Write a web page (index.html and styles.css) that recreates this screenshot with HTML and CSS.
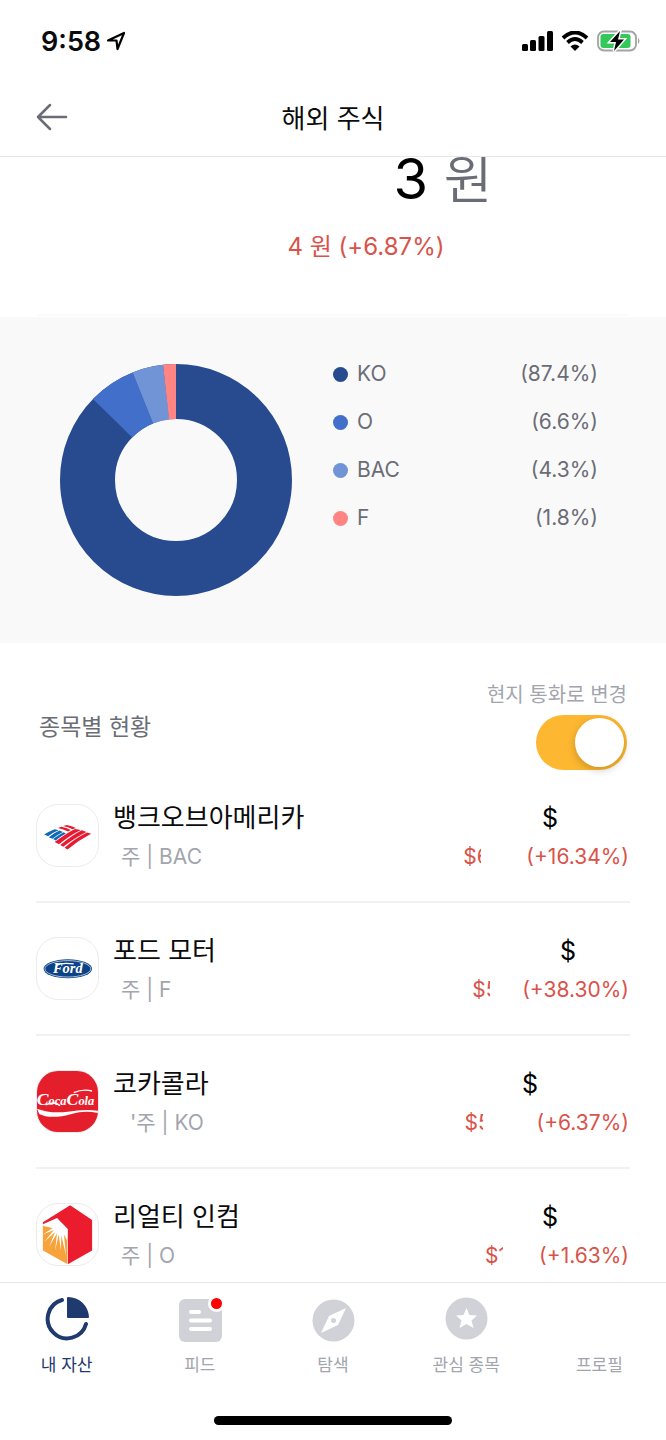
FILE: index.html
```html
<!DOCTYPE html>
<html lang="ko">
<head>
    <meta charset="UTF-8">
    <meta name="viewport" content="width=device-width, initial-scale=1.0">
    <title>해외 주식</title>
    <link rel="stylesheet" href="styles.css">
</head>
<body>

    <!-- Status bar -->
    <div class="status-bar">
        <div class="status-left">
            <span class="clock">9:58</span>
            <svg class="location" viewBox="0 0 20 20" width="20" height="20">
                <path d="M2 9.5 L18 2 L11.5 18 L10.5 9.5 Z" fill="none" stroke="#000" stroke-width="2.2" stroke-linejoin="round"/>
            </svg>
        </div>
        <div class="status-right">
            <svg viewBox="0 0 31 20" width="31" height="20">
                <rect x="0" y="13" width="6" height="7" rx="1.5"/>
                <rect x="8" y="9" width="6" height="11" rx="1.5"/>
                <rect x="16.500" y="5" width="6" height="15" rx="1.5"/>
                <rect x="25" y="0" width="6" height="20" rx="1.5"/>
            </svg>
            <svg viewBox="0 0 28 20" width="28" height="20">
                <path d="M2 7 Q14 -4 26 7" fill="none" stroke="#000" stroke-width="4"/>
                <path d="M6.500 11.500 Q14 4.500 21.500 11.500" fill="none" stroke="#000" stroke-width="3.800"/>
                <path d="M9.500 15.500 Q14 11.500 18.500 15.500 L14 20 Z"/>
            </svg>
            <svg viewBox="0 0 44 22" width="44" height="22">
                <rect x="1" y="1.500" width="38" height="19" rx="6" fill="#fff" stroke="#a3a3a3" stroke-width="1.800"/>
                <rect x="3.500" y="4" width="30" height="14" rx="3" fill="#34c759"/>
                <path d="M41 8 Q44 11 41 14 Z" fill="#a3a3a3"/>
                <path d="M23 1 L13 12 H19 L17 21 L27 9.500 H21 Z" stroke="#fff" stroke-width="3"/>
                <path d="M23 1 L13 12 H19 L17 21 L27 9.500 H21 Z"/>
            </svg>
        </div>
    </div>

    <!-- Title bar -->
    <header class="title-bar">
        <button class="back-btn" type="button" aria-label="뒤로">
            <svg viewBox="0 0 32 28" width="32" height="28">
                <path d="M14 2 L2 14 L14 26 M2 14 H30" fill="none" stroke="#6b6d76" stroke-width="2.500" stroke-linecap="round" stroke-linejoin="round"/>
            </svg>
        </button>
        <h1>해외 주식</h1>
    </header>

    <main class="content">
        <!-- Total value -->
        <section class="total">
            <p class="total-value"><span class="mask"></span>3 <span class="unit">원</span></p>
            <p class="total-change"><span class="mask"></span>4 원 (+6.87%)</p>
        </section>

        <!-- Portfolio weights -->
        <section class="weights">
            <svg class="donut" viewBox="-116 -116 232 232" width="232" height="232">
                <g fill="none" stroke-width="55" transform="rotate(-90)">
                    <circle r="88.500" pathLength="1000" stroke="#284b8f"/>
                    <circle r="88.500" pathLength="1000" stroke="#416fca" stroke-dasharray="66 934" stroke-dashoffset="-873"/>
                    <circle r="88.500" pathLength="1000" stroke="#7194d6" stroke-dasharray="43 957" stroke-dashoffset="-939"/>
                </g>
                <path d="M-13 -115.300 A116 116 0 0 1 0 -116 V-61 A61 61 0 0 0 -7 -60.600 Z" fill="#ff8585"/>
            </svg>
            <ul class="legend">
                <li class="ko"><span>KO</span><span class="percent">(87.4%)</span></li>
                <li class="o"><span>O</span><span class="percent">(6.6%)</span></li>
                <li class="bac"><span>BAC</span><span class="percent">(4.3%)</span></li>
                <li class="f"><span>F</span><span class="percent">(1.8%)</span></li>
            </ul>
        </section>

        <!-- Holdings -->
        <section class="holdings">
            <div class="holdings-head">
                <h2>종목별 현황</h2>
                <label class="currency">
                    <span>현지 통화로 변경</span>
                    <input type="checkbox" class="switch" role="switch" checked>
                </label>
            </div>

            <ul class="stocks">
                <li class="stock">
                    <svg class="logo" viewBox="0 0 186 186">
                        <g fill="#e61b32">
                            <path d="M54 113 Q92 84 116 73 L134 76 Q100 92 67 120 Z"/>
                            <path d="M71 122 Q108 91 137 77 L151 82 Q116 99 80 127 Z"/>
                            <path d="M84 130 Q122 98 153 84 L165 88 Q126 108 93 136 Z"/>
                            <path d="M64 70 L74 66 Q91 69 103 76 L95 81 Q80 73 64 70 Z"/>
                            <path d="M80 64 L91 61 Q106 64 119 70 L108 74 Q95 67 80 64 Z"/>
                        </g>
                        <g fill="#1268b3">
                            <path d="M22 90 Q38 80 54 74 L66 77 Q48 84 34 95 Z"/>
                            <path d="M36 98 Q54 84 69 78 L79 82 Q62 90 47 103 Z"/>
                            <path d="M49 104 Q67 90 81 83 L88 87 Q72 96 57 108 Z"/>
                        </g>
                    </svg>
                    <div class="stock-info">
                        <strong>뱅크오브아메리카</strong>
                        <span class="shares">주 | BAC</span>
                    </div>
                    <div class="stock-value">
                        <span class="amount">$<span class="mask"></span></span>
                        <span class="change"><span class="cut">$6</span>(+16.34%)</span>
                    </div>
                </li>
                <li class="stock stock-f">
                    <svg class="logo" viewBox="0 0 186 186">
                        <ellipse cx="94" cy="94" rx="74" ry="29" fill="#0c4287"/>
                        <ellipse cx="94" cy="94" rx="70" ry="25" fill="none" stroke="#fff" stroke-width="2"/>
                        <path d="M60 84 Q74 74 112 79" fill="none" stroke="#fff" stroke-width="4"/>
                        <text class="ford-text" x="94" y="108">Ford</text>
                    </svg>
                    <div class="stock-info">
                        <strong>포드 모터</strong>
                        <span class="shares">주 | F</span>
                    </div>
                    <div class="stock-value">
                        <span class="amount">$<span class="mask"></span></span>
                        <span class="change"><span class="cut">$5</span>(+38.30%)</span>
                    </div>
                </li>
                <li class="stock stock-ko">
                    <svg class="logo" viewBox="0 0 186 186">
                        <rect width="186" height="186" fill="#e51e2b"/>
                        <text class="cola-text" x="87" y="104"><tspan class="cola-cap">C</tspan>oca<tspan class="cola-cap">C</tspan>ola</text>
                        <path d="M26 103 Q56 91 70 106 M112 66 Q140 54 168 61" fill="none" stroke="#fff" stroke-width="4"/>
                        <path d="M0 115 Q42 131 94 124 Q145 115 186 121 V128 Q144 120 108 130 Q42 149 7 131 Z" fill="#fff"/>
                    </svg>
                    <div class="stock-info">
                        <strong>코카콜라</strong>
                        <span class="shares">'주 | KO</span>
                    </div>
                    <div class="stock-value">
                        <span class="amount">$<span class="mask"></span></span>
                        <span class="change"><span class="cut">$5</span>(+6.37%)</span>
                    </div>
                </li>
                <li class="stock stock-o">
                    <svg class="logo" viewBox="0 0 186 186">
                        <path d="M18 65 H56 L92 86 V183 L18 142 Z" fill="#f6a33b"/>
                        <g fill="#fff">
                            <path d="M18 67 L60 42 L94 75 V98 L91 110 L82 93 L88 155 L74 95 L73 142 L66 93 L55 143 L61 89 L37 130 L55 85 L22 116 L51 79 L18 93 L48 73 Z"/>
                        </g>
                        <path d="M18 56 L101 4 L168 49 V142 L94 184 V76 L61 43 L18 62 Z" fill="#eb1c2e"/>
                    </svg>
                    <div class="stock-info">
                        <strong>리얼티 인컴</strong>
                        <span class="shares">주 | O</span>
                    </div>
                    <div class="stock-value">
                        <span class="amount">$<span class="mask"></span></span>
                        <span class="change"><span class="cut">$1</span>(+1.63%)</span>
                    </div>
                </li>
            </ul>
        </section>
    </main>

    <!-- Bottom tabs -->
    <nav class="tabs">
        <a href="#assets" class="tab active">
            <svg viewBox="0 0 44 46" width="44" height="46">
                <path d="M17 3 A19.500 19.500 0 1 0 41 27" fill="none" stroke="#1f3a6e" stroke-width="4" stroke-linecap="round"/>
                <path d="M22 1 Q22 0 23 0 A21 21 0 0 1 44 20 Q44 21 43 21 H23 Q22 21 22 20 Z" fill="#1f3a6e"/>
            </svg>
            <span>내 자산</span>
        </a>
        <a href="#feed" class="tab">
            <svg viewBox="0 0 44 46" width="44" height="46">
                <rect x="1" y="2" width="43" height="43" rx="6" fill="#d1d2d7"/>
                <path d="M13 15 H21 M13 23.500 H32 M13 32 H32" stroke="#fff" stroke-width="4" stroke-linecap="round"/>
                <circle cx="38.500" cy="6.500" r="8.500" fill="#fff"/>
                <circle cx="38.500" cy="6.500" r="5.500" fill="#f00"/>
            </svg>
            <span>피드</span>
        </a>
        <a href="#explore" class="tab">
            <svg viewBox="0 0 44 46" width="44" height="46">
                <circle cx="22.500" cy="23.500" r="21" fill="#d1d2d7"/>
                <path d="M35 11 L18 19 L10 36 L27 28 Z" fill="#fff"/>
                <circle cx="22.500" cy="23.500" r="2.500" fill="#d1d2d7"/>
            </svg>
            <span>탐색</span>
        </a>
        <a href="#watchlist" class="tab">
            <svg viewBox="0 0 44 46" width="44" height="46">
                <circle cx="22.500" cy="21.500" r="21" fill="#d1d2d7"/>
                <path d="M22.500 11 L25.500 18 L33 18.500 L27.500 23.500 L29.500 31 L22.500 27 L15.500 31 L17.500 23.500 L12 18.500 L19.500 18 Z" fill="#fff"/>
            </svg>
            <span>관심 종목</span>
        </a>
        <a href="#profile" class="tab">
            <svg viewBox="0 0 44 46" width="44" height="46"></svg>
            <span>프로필</span>
        </a>
    </nav>
    <div class="home-indicator"></div>

</body>
</html>
```
FILE: styles.css
```css
* {
    margin: 0;
    padding: 0;
    box-sizing: border-box;
}

body {
    display: flex;
    flex-direction: column;
    height: 100vh;
    background: #fff;
    color: #0b0b0d;
    font-family: Inter, "Noto Sans CJK KR", sans-serif;
    font-size: 21px;
}

ul {
    list-style: none;
}

svg {
    display: block;
    flex-shrink: 0;
}

/* Status bar */
.status-bar {
    display: flex;
    justify-content: space-between;
    align-items: center;
    flex-shrink: 0;
    height: 80px;
    padding: 2px 25px 0 41px;
}

.status-left {
    display: flex;
    align-items: center;
    gap: 5px;
}

.status-right {
    display: flex;
    align-items: center;
    gap: 8px;
}

.clock {
    font-size: 27px;
    font-weight: 600;
}

/* Title bar */
.title-bar {
    display: grid;
    grid-template-columns: 32px 1fr 32px;
    align-items: center;
    flex-shrink: 0;
    height: 77px;
    padding: 0 36px 3px;
    border-bottom: 1px solid #e6e7ea;
}

.title-bar h1 {
    font-size: 26px;
    font-weight: 400;
    text-align: center;
}

.back-btn {
    border: none;
    background: none;
    cursor: pointer;
}

.content {
    flex: 1;
    min-height: 0;
    overflow: hidden;
}

/* Hidden digits */
.mask {
    display: inline-block;
}

/* Total value */
.total {
    height: 160px;
    text-align: center;
    overflow: hidden;
}

.total::after {
    content: "";
    display: block;
    height: 2px;
    margin: 49px 38px 0;
    background: #fafafa;
}

.total-value {
    margin-top: -10px;
    font-size: 56px;
    line-height: 64px;
    color: #000;
}

.total-value .mask {
    width: 220px;
}

.total-value .unit {
    font-size: 53px;
    font-weight: 350;
    color: #6b6d76;
}

.total-change {
    margin-top: 17px;
    font-size: 24px;
    line-height: 36px;
    color: #d9534a;
}

.total-change .mask {
    width: 66px;
}

/* Donut chart and legend */
.weights {
    display: flex;
    gap: 41px;
    padding: 47px 68px 47px 60px;
    background: #f9f9f9;
}

.legend {
    flex: 1;
    display: flex;
    flex-direction: column;
    gap: 28px;
    color: #6b6d76;
}

.legend li {
    display: flex;
    align-items: center;
    gap: 9px;
    line-height: 20px;
}

.legend li::before {
    content: "";
    width: 15px;
    height: 15px;
    border-radius: 50%;
    background: #284b8f;
}

.legend .o::before {
    background: #416fca;
}

.legend .bac::before {
    background: #7194d6;
}

.legend .f::before {
    background: #ff8585;
}

.legend .percent {
    margin-left: auto;
}

/* Holdings */
.holdings {
    padding: 36px 36px 0;
}

.holdings-head {
    display: flex;
    justify-content: space-between;
    align-items: center;
    padding: 0 3px;
}

.holdings-head h2 {
    font-size: 23px;
    font-weight: 400;
    color: #6b6d76;
}

.currency {
    display: flex;
    flex-direction: column;
    align-items: flex-end;
    gap: 4px;
    font-size: 20px;
    line-height: 32px;
    color: #a3a5ae;
}

.switch {
    appearance: none;
    width: 91px;
    height: 55px;
    padding: 3px;
    border-radius: 28px;
    background: #d1d2d7;
    cursor: pointer;
}

.switch::before {
    content: "";
    display: block;
    width: 49px;
    height: 49px;
    border-radius: 50%;
    background: #fff;
    box-shadow: 0 3px 8px rgba(0, 0, 0, 0.2);
}

.switch:checked {
    background: #fdb730;
}

.switch:checked::before {
    margin-left: auto;
}

.stock {
    display: flex;
    align-items: center;
    gap: 14px;
    height: 133px;
    border-bottom: 2px solid #f0f1f4;
}

.logo {
    width: 63px;
    height: 63px;
    border: 1px solid #ececef;
    border-radius: 22px;
}

.ford-text {
    fill: #fff;
    font: italic 700 44px "Liberation Serif", serif;
    text-anchor: middle;
}

.cola-text {
    fill: #fff;
    font: italic 700 38px "Liberation Serif", serif;
    text-anchor: middle;
}

.cola-cap {
    font-size: 54px;
}

.stock-info {
    flex: 1;
    display: flex;
    flex-direction: column;
    padding-top: 3px;
}

.stock-info strong {
    font-size: 26px;
    font-weight: 400;
    line-height: 40px;
}

.shares {
    padding-left: 8px;
    line-height: 38px;
    color: #a3a5ae;
}

.stock-ko .shares {
    padding-left: 17px;
}

.stock-value {
    display: flex;
    flex-direction: column;
    align-items: flex-end;
    padding: 3px 1px 0 0;
}

.amount {
    font-size: 25px;
    line-height: 40px;
    color: #000;
}

.amount .mask {
    width: 71px;
}

.change {
    display: flex;
    line-height: 38px;
    color: #d9534a;
}

.cut {
    width: 18px;
    margin-right: 45px;
    overflow: hidden;
}

.stock-f .mask {
    width: 53px;
}

.stock-f .cut {
    margin-right: 32px;
}

.stock-ko .mask {
    width: 91px;
}

.stock-ko .cut {
    margin-right: 54px;
}

.stock-o .cut {
    margin-right: 36px;
}

/* Bottom tabs */
.tabs {
    display: flex;
    flex-shrink: 0;
    height: 116px;
    padding-top: 14px;
    border-top: 1px solid #e3e4e7;
}

.tab {
    flex: 1;
    display: flex;
    flex-direction: column;
    align-items: center;
    gap: 8px;
    font-size: 17px;
    line-height: 28px;
    color: #a3a5ae;
    text-decoration: none;
}

.tab.active {
    color: #1f3a6e;
}

.home-indicator {
    flex-shrink: 0;
    width: 238px;
    height: 9px;
    margin: 18px auto 15px;
    border-radius: 5px;
    background: #000;
}
```
